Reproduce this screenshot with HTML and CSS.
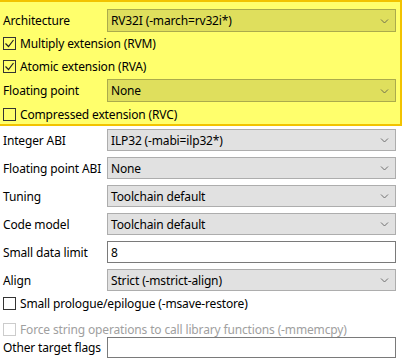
FILE: index.html
```html
<!DOCTYPE html>
<html lang="en">
<head>
	<meta charset="UTF-8">
	<title>Target settings</title>
	<link rel="stylesheet" href="styles.css">
</head>
<body class="body">
	<section class="group group--changed">
		<div class="row row--combo">
			<span class="row__label">Architecture</span>
			<div class="combo">
				<span class="combo__value">RV32I (-march=rv32i*)</span>
				<svg class="combo__arrow" width="9" height="6" viewBox="0 0 9 6"><path d="M1 1.5l3.5 3.5 3.5-3.5" fill="none" stroke="#707050" stroke-width="1"/></svg>
			</div>
		</div>
		<label class="row row--check">
			<span class="check check--on"><svg width="11" height="11" viewBox="0 0 11 11"><path d="M1.5 5.5l3 3 5-6.5" fill="none" stroke="#222" stroke-width="1.2"/></svg></span>
			<span>Multiply extension (RVM)</span>
		</label>
		<label class="row row--check">
			<span class="check check--on"><svg width="11" height="11" viewBox="0 0 11 11"><path d="M1.5 5.5l3 3 5-6.5" fill="none" stroke="#222" stroke-width="1.2"/></svg></span>
			<span>Atomic extension (RVA)</span>
		</label>
		<div class="row row--combo row--after-check">
			<span class="row__label">Floating point</span>
			<div class="combo">
				<span class="combo__value">None</span>
				<svg class="combo__arrow" width="9" height="6" viewBox="0 0 9 6"><path d="M1 1.5l3.5 3.5 3.5-3.5" fill="none" stroke="#707050" stroke-width="1"/></svg>
			</div>
		</div>
		<label class="row row--check row--last">
			<span class="check"></span>
			<span>Compressed extension (RVC)</span>
		</label>
	</section>

	<section class="group">
		<div class="row row--combo">
			<span class="row__label">Integer ABI</span>
			<div class="combo">
				<span class="combo__value">ILP32 (-mabi=ilp32*)</span>
				<svg class="combo__arrow" width="9" height="6" viewBox="0 0 9 6"><path d="M1 1.5l3.5 3.5 3.5-3.5" fill="none" stroke="#707070" stroke-width="1"/></svg>
			</div>
		</div>
		<div class="row row--combo">
			<span class="row__label">Floating point ABI</span>
			<div class="combo">
				<span class="combo__value">None</span>
				<svg class="combo__arrow" width="9" height="6" viewBox="0 0 9 6"><path d="M1 1.5l3.5 3.5 3.5-3.5" fill="none" stroke="#707070" stroke-width="1"/></svg>
			</div>
		</div>
		<div class="row row--combo">
			<span class="row__label">Tuning</span>
			<div class="combo">
				<span class="combo__value">Toolchain default</span>
				<svg class="combo__arrow" width="9" height="6" viewBox="0 0 9 6"><path d="M1 1.5l3.5 3.5 3.5-3.5" fill="none" stroke="#707070" stroke-width="1"/></svg>
			</div>
		</div>
		<div class="row row--combo">
			<span class="row__label">Code model</span>
			<div class="combo">
				<span class="combo__value">Toolchain default</span>
				<svg class="combo__arrow" width="9" height="6" viewBox="0 0 9 6"><path d="M1 1.5l3.5 3.5 3.5-3.5" fill="none" stroke="#707070" stroke-width="1"/></svg>
			</div>
		</div>
		<div class="row row--combo">
			<span class="row__label">Small data limit</span>
			<div class="field">8</div>
		</div>
		<div class="row row--combo">
			<span class="row__label">Align</span>
			<div class="combo">
				<span class="combo__value">Strict (-mstrict-align)</span>
				<svg class="combo__arrow" width="9" height="6" viewBox="0 0 9 6"><path d="M1 1.5l3.5 3.5 3.5-3.5" fill="none" stroke="#707070" stroke-width="1"/></svg>
			</div>
		</div>
		<label class="row row--check row--plain">
			<span class="check"></span>
			<span>Small prologue/epilogue (-msave-restore)</span>
		</label>
		<label class="row row--check row--plain row--disabled">
			<span class="check"></span>
			<span>Force string operations to call library functions (-mmemcpy)</span>
		</label>
		<div class="row row--combo row--flags">
			<span class="row__label">Other target flags</span>
			<div class="field"></div>
		</div>
	</section>
</body>
</html>
```

FILE: styles.css
```css
:root {
	--yellow: #ffff6c;
	--yellow-border: #f2c300;
	--combo-bg: #e1e1e1;
	--combo-line: #adadad;
	--text: #000;
	--disabled: #a0a0a0;
}

*,
*::before,
*::after {
	box-sizing: border-box;
}

.body {
	margin: 0;
	width: 411px;
	color: var(--text);
	background: #fff;
	font-family: "Noto Sans", "Open Sans", sans-serif;
	font-size: 12px;
	letter-spacing: -0.15px;
}

.group {
	width: 402px;
	padding: 0 6px 0 3px;
}

.group--changed {
	padding-top: 7px;
	padding-right: 4px;
	background: var(--yellow);
	border-top: 2px solid var(--yellow-border);
	border-right: 2px solid var(--yellow-border);
	border-bottom: 2px solid var(--yellow-border);
}

.row {
	display: flex;
	align-items: center;
	white-space: nowrap;
}

.row--combo {
	height: 28px;
}

.group--changed .row--combo {
	height: 23px;
}

.group--changed .row--after-check {
	margin-top: 1px;
}

.row__label {
	width: 104px;
	flex: none;
}

.row--check {
	height: 23px;
	gap: 4px;
}

.row--last {
	height: 19px;
	margin-top: 3px;
}

.row--plain {
	height: 18px;
}

.row--plain + .row--plain {
	height: 16px;
	margin-top: 9px;
}

.row--flags {
	height: 21px;
}

.row--disabled {
	color: var(--disabled);
}

.check {
	display: flex;
	align-items: center;
	justify-content: center;
	width: 13px;
	height: 13px;
	border: 1px solid #333;
	background: transparent;
}

.row--disabled .check {
	border-color: #cccccc;
}

.combo,
.field {
	flex: 1;
	display: flex;
	align-items: center;
	height: 22px;
	padding: 0 6px 0 3px;
}

.combo {
	justify-content: space-between;
	background: var(--combo-bg);
	border: 1px solid var(--combo-line);
}

.group--changed .combo {
	height: 23px;
	background: #dfdf5d;
	border-color: #abab4c;
}

.field {
	background: #fff;
	border: 1px solid #7a7a7a;
}

.row--flags .field {
	height: 21px;
}

.combo__arrow {
	flex: none;
}
```
